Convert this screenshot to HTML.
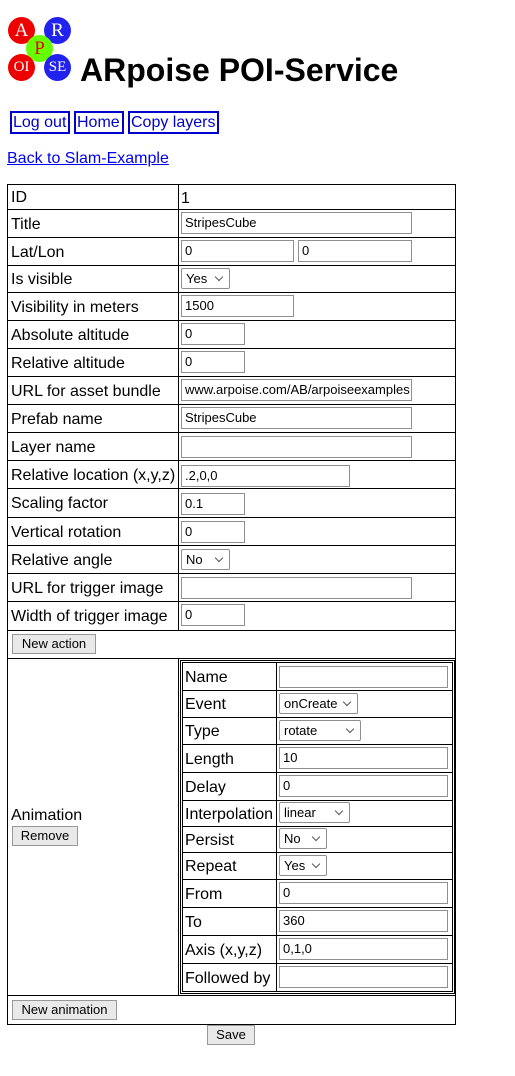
<!DOCTYPE html>
<html><head><meta charset="utf-8"><style>
*{box-sizing:border-box;margin:0;padding:0}
body{width:515px;height:1076px;background:#fff;font-family:"Liberation Sans",Arial,sans-serif;font-size:16px;color:#000;position:relative;overflow:hidden}
.a{position:absolute}
.lbl{position:absolute;display:flex;align-items:center;white-space:nowrap;padding-top:3px}
.in{position:absolute;height:22px;border:1px solid #8f8f8f;background:#fff;font-size:13px;padding-left:3px;line-height:20px}
.sel{position:absolute;height:21px;border:1px solid #8f8f8f;border-radius:2px;background:#fff;font-size:13px;padding-left:4px;line-height:19px}
.sel:after{content:"";position:absolute;right:7px;top:5px;width:5px;height:5px;border-right:1px solid #555;border-bottom:1px solid #555;transform:rotate(45deg)}
.btn{position:absolute;height:20px;border:1px solid #999;background:#e9e9e9;font-size:13px;text-align:center;line-height:18px}
.h{position:absolute;height:1px;background:#000}
.v{position:absolute;width:1px;background:#000}
.nav{position:absolute;top:111px;height:23px;border:2px solid #00c;color:#00c;font-size:16px;line-height:19px;padding:0 1px;white-space:nowrap;overflow:hidden}
.c{position:absolute;border-radius:50%;color:#fff;font-family:"Liberation Serif",serif;font-size:19px;text-align:center;line-height:27px;width:27px;height:27px}
</style></head><body>
<div class="c" style="left:8px;top:17px;background:#e00">A</div>
<div class="c" style="left:44px;top:17px;background:#22e">R</div>
<div class="c" style="left:26px;top:35px;background:#6f0;color:#e00">P</div>
<div class="c" style="left:8px;top:54px;background:#e00;font-size:15px">OI</div>
<div class="c" style="left:44px;top:54px;background:#22e;font-size:15px">SE</div>
<div class="a" style="left:80px;top:50px;font-size:32px;font-weight:bold;line-height:40px">ARpoise POI-Service</div>
<div class="nav" style="left:10px;width:60px">Log out</div>
<div class="nav" style="left:74px;width:50px">Home</div>
<div class="nav" style="left:128px;width:91px">Copy layers</div>
<div class="a" style="left:7px;top:150px;color:#00e;text-decoration:underline">Back to Slam-Example</div>

<div class="a" style="left:7px;top:184px;width:449px;height:841px;border:1px solid #000"></div>
<div class="v" style="left:178px;top:184px;height:446px"></div>
<div class="v" style="left:178px;top:658px;height:337px"></div>
<div id="rows"></div>

<div class="btn" style="left:12px;top:634px;width:84px">New action</div>
<div class="lbl" style="left:11px;top:804px;height:20px">Animation</div>
<div class="btn" style="left:12px;top:826px;width:66px">Remove</div>
<div class="a" style="left:180px;top:660px;width:275px;height:334px;border:1px solid #000"></div>
<div class="a" style="left:182px;top:662px;width:271px;height:330px;border:1px solid #000"></div>
<div class="v" style="left:276px;top:662px;height:330px"></div>
<div class="btn" style="left:12px;top:1000px;width:105px">New animation</div>
<div class="btn" style="left:207px;top:1025px;width:48px">Save</div>
<script>
var R=[["ID",184,209,'<div class="lbl" style="left:181px;top:186px;height:22px">1</div>'],
["Title",209,237,'<div class="in" style="left:181px;top:212px;width:231px">StripesCube</div>'],
["Lat/Lon",237,265,'<div class="in" style="left:181px;top:240px;width:113px">0</div><div class="in" style="left:298px;top:240px;width:114px">0</div>'],
["Is visible",265,292,'<div class="sel" style="left:181px;top:268px;width:49px">Yes</div>'],
["Visibility in meters",292,320,'<div class="in" style="left:181px;top:295px;width:113px">1500</div>'],
["Absolute altitude",320,348,'<div class="in" style="left:181px;top:323px;width:64px">0</div>'],
["Relative altitude",348,376,'<div class="in" style="left:181px;top:351px;width:64px">0</div>'],
["URL for asset bundle",376,404,'<div class="in" style="left:181px;top:379px;width:231px;overflow:hidden;white-space:nowrap">www.arpoise.com/AB/arpoiseexamples</div>'],
["Prefab name",404,432,'<div class="in" style="left:181px;top:407px;width:231px">StripesCube</div>'],
["Layer name",432,460,'<div class="in" style="left:181px;top:436px;width:231px"></div>'],
["Relative location (x,y,z)",460,488,'<div class="in" style="left:181px;top:465px;width:169px">.2,0,0</div>'],
["Scaling factor",488,517,'<div class="in" style="left:181px;top:493px;width:64px">0.1</div>'],
["Vertical rotation",517,545,'<div class="in" style="left:181px;top:521px;width:64px">0</div>'],
["Relative angle",545,573,'<div class="sel" style="left:181px;top:549px;width:49px">No</div>'],
["URL for trigger image",573,601,'<div class="in" style="left:181px;top:577px;width:231px"></div>'],
["Width of trigger image",601,630,'<div class="in" style="left:181px;top:604px;width:64px">0</div>']];
var h='';
R.forEach(function(r){h+='<div class="lbl" style="left:11px;top:'+r[1]+'px;height:'+(r[2]-r[1])+'px">'+r[0]+'</div>'+r[3]+'<div class="h" style="left:7px;width:449px;top:'+r[2]+'px"></div>';});
h+='<div class="h" style="left:7px;width:449px;top:658px"></div><div class="h" style="left:7px;width:449px;top:995px"></div>';
var I=[["Name",663,690,'i',169,""],["Event",690,717,'s',79,"onCreate"],["Type",717,744,'s',82,"rotate"],["Length",744,772,'i',169,"10"],["Delay",772,800,'i',169,"0"],["Interpolation",800,826,'s',71,"linear"],["Persist",826,852,'s',48,"No"],["Repeat",852,879,'s',48,"Yes"],["From",879,907,'i',169,"0"],["To",907,935,'i',169,"360"],["Axis (x,y,z)",935,963,'i',169,"0,1,0"],["Followed by",963,991,'i',169,""]];
I.forEach(function(r,k){var t=r[1]+Math.round((r[2]-r[1]-22)/2);
h+='<div class="lbl" style="left:185px;top:'+r[1]+'px;height:'+(r[2]-r[1])+'px">'+r[0]+'</div>';
h+='<div class="'+(r[3]=='i'?'in':'sel')+'" style="left:279px;top:'+t+'px;width:'+r[4]+'px">'+r[5]+'</div>';
if(k<I.length-1)h+='<div class="h" style="left:182px;width:271px;top:'+r[2]+'px"></div>';});
document.getElementById('rows').innerHTML=h;
</script>
</body></html>
